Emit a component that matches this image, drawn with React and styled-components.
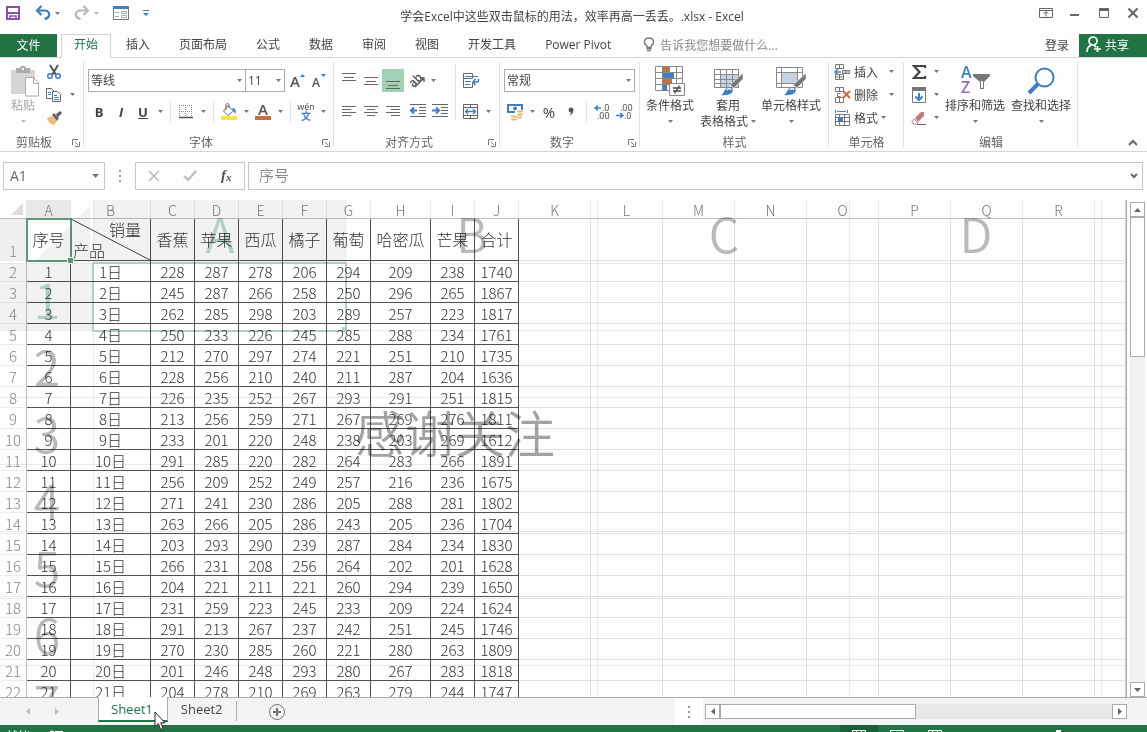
import { useState } from 'react';
import styled, { createGlobalStyle, css } from 'styled-components';

const uiFont = '"Open Sans", "Noto Sans CJK SC", sans-serif';
const cellFont = '"Noto Sans CJK SC", "Noto Sans", sans-serif';

const colors = {
  green: '#217346',
  blue: '#3f7fbf',
  gray: '#777',
  text: '#444',
  line: '#d4d4d4',
  orange: '#c4703f',
};

const GlobalStyle = createGlobalStyle`
  * { box-sizing: border-box; }

  body {
    margin: 0;
    overflow: hidden;
    background: #fdfdfd;
    font-family: ${uiFont};
    font-size: 12px;
    color: ${colors.text};
  }

  button, input, select {
    font: inherit;
    color: inherit;
    padding: 0;
    margin: 0;
    border: 0;
    background: none;
  }

  svg { display: block; flex: none; overflow: visible; }
`;

const Window = styled.div`
  height: calc(100vh + 15px);
  display: flex;
  flex-direction: column;
`;

/* title bar */

const TitleBar = styled.header`
  flex: none;
  height: 34px;
  display: grid;
  grid-template-columns: 1fr auto 1fr;
  align-items: start;
  padding: 0 8px 0 5px;
`;

const QuickAccess = styled.div`
  display: flex;
  align-items: center;
  gap: 14px;
  height: 26px;
`;

const Title = styled.h1`
  margin: 0;
  font-size: 12px;
  font-weight: 400;
  line-height: 34px;
  white-space: nowrap;
`;

const WindowButtons = styled.div`
  display: flex;
  justify-content: flex-end;
  gap: 14px;
  height: 26px;
  align-items: center;
`;

const PlainButton = styled.button`
  display: flex;
  align-items: center;
  justify-content: center;
  gap: 4px;
`;

/* tab row */

const TabRow = styled.nav`
  flex: none;
  height: 24px;
  display: flex;
  gap: 1px;
  border-bottom: 1px solid ${colors.line};
`;

const FileTab = styled.button`
  width: 57px;
  margin-right: 3px;
  padding-bottom: 2px;
  background: ${colors.green};
  color: #fff;
`;

const Tab = styled.button`
  height: 24px;
  padding: 0 14px 4px;
  white-space: nowrap;

  ${props => props.$active && css`
    padding: 0 12px 5px;
    border: 1px solid ${colors.line};
    border-bottom: 0;
    background: #fdfdfd;
    color: ${colors.green};
  `}
`;

const TellMe = styled.button`
  display: flex;
  align-items: center;
  gap: 5px;
  margin-left: 17px;
  padding-bottom: 2px;
  color: #888;
  white-space: nowrap;
`;

const Account = styled.div`
  display: flex;
  gap: 10px;
  margin-left: auto;

  button { padding-bottom: 2px; }
`;

const ShareButton = styled.button`
  display: flex;
  align-items: center;
  gap: 4px;
  padding: 0 18px 0 7px;
  background: ${colors.green};
  color: #fff;
`;

/* ribbon */

const Ribbon = styled.section`
  flex: none;
  height: 94px;
  display: flex;
  border-bottom: 1px solid ${colors.line};
`;

const Group = styled.div`
  flex: 0 0 ${props => props.$width}px;
  display: flex;
  flex-direction: column;
  padding: 3px 3px 0 4px;
  margin: 4px 0;
  border-right: 1px solid #e1e1e1;
`;

const GroupBody = styled.div`
  flex: none;
  height: 66px;
  display: flex;
  align-items: flex-start;
`;

const GroupFooter = styled.div`
  flex: none;
  height: 14px;
  display: flex;
  align-items: center;
  margin-top: 5px;
  line-height: 14px;
  color: #666;
  white-space: nowrap;

  span { flex: 1; text-align: center; }
  button { width: 8px; margin-left: 8px; }
`;

const Stack = styled.div`
  display: flex;
  flex-direction: column;
`;

const ToolRow = styled.div`
  display: flex;
  align-items: center;
  height: 31px;
`;

const SmallRow = styled.div`
  display: flex;
  align-items: center;
  height: 23px;
  margin-top: ${props => (props.$first ? '-5px' : '0')};
`;

const Tool = styled.button`
  width: ${props => props.$width || 22}px;
  height: 23px;
  display: flex;
  align-items: center;
  justify-content: center;
  font-size: ${props => (props.$large ? 15 : 13)}px;
  background: ${props => (props.$on ? '#9fd1b7' : 'none')};
`;

const CaretButton = styled.button`
  width: 12px;
  height: 22px;
  display: flex;
  align-items: center;
  justify-content: center;
`;

const Rule = styled.span`
  flex: none;
  width: 1px;
  height: ${props => props.$height || 22}px;
  margin: 0 4px;
  background: #e1e1e1;
`;

const Gap = styled.span`
  flex: none;
  width: ${props => props.$width || 3}px;
`;

const SelectWrap = styled.div`
  position: relative;
  flex: ${props => (props.$width ? `0 0 ${props.$width}px` : '1')};
  margin-right: ${props => (props.$joined ? '-1px' : '0')};
`;

const Select = styled.select`
  appearance: none;
  width: 100%;
  height: 23px;
  padding: 0 14px 0 2px;
  border: 1px solid #ababab;
  border-radius: 0;
  background: #fff;
`;

const SelectCaret = styled.span`
  position: absolute;
  right: 4px;
  top: 10px;
  pointer-events: none;
`;

const BigButton = styled.button`
  width: ${props => props.$width}px;
  display: flex;
  flex-direction: column;
  align-items: center;
  line-height: 15px;
  white-space: nowrap;
  color: ${props => (props.$disabled ? '#a6a6a6' : colors.text)};
`;

const BigIcon = styled.span`
  height: 32px;
  display: flex;
  align-items: center;
`;

const BigLine = styled.span`
  height: 16px;
  display: flex;
  align-items: center;
  gap: 3px;
`;

const LabelTool = styled.button`
  display: flex;
  align-items: center;
  gap: 3px;
  padding-left: 1px;
  white-space: nowrap;
`;

const CollapseSlot = styled.div`
  flex: 1;
  display: flex;
  justify-content: flex-end;
  align-items: flex-end;
  padding: 0 9px 5px 0;
`;

/* formula bar */

const FormulaBar = styled.div`
  flex: none;
  display: flex;
  align-items: stretch;
  height: 48px;
  padding: 10px 4px 10px 3px;
`;

const NameBox = styled.div`
  flex: 0 0 102px;
  min-width: 0;
  display: flex;
  align-items: center;
  border: 1px solid #c6c6c6;
  padding: 0 5px 0 6px;

  input {
    flex: 1;
    width: 0;
    min-width: 0;
    padding-bottom: 2px;
    font-size: 14px;
    color: #666;
  }
`;

const Dots = styled.span`
  flex: 0 0 30px;
  display: flex;
  align-items: center;
  justify-content: center;
`;

const FormulaButtons = styled.div`
  flex: 0 0 110px;
  display: flex;
  align-items: center;
  justify-content: space-between;
  padding: 0 9px 0 12px;
  margin-right: 3px;
  border: 1px solid #c6c6c6;
`;

const FormulaInput = styled.div`
  flex: 1;
  display: flex;
  align-items: center;
  border: 1px solid #c6c6c6;
  padding: 0 3px 0 10px;

  input {
    flex: 1;
    min-width: 0;
    padding-bottom: 3px;
    font-family: ${cellFont};
    font-size: 15px;
    font-weight: 300;
    color: #666;
  }
`;

/* sheet */

const SheetArea = styled.main`
  flex: 1;
  min-height: 0;
  display: flex;
`;

const GridPane = styled.div`
  position: relative;
  flex: 1;
  min-width: 0;
  overflow: hidden;
  border-right: 1px solid #ababab;
`;

const Grid = styled.table`
  width: 100%;
  table-layout: fixed;
  border-collapse: separate;
  border-spacing: 0;
  font-family: ${cellFont};
  font-weight: 300;
  font-size: 15px;
  line-height: 18px;
  color: #333;

  th, td {
    padding: 0;
    text-align: center;
    font-weight: 300;
    overflow: hidden;
    white-space: nowrap;
  }
`;

const ColHead = styled.th`
  height: 19px;
  line-height: 20px;
  font-size: 14px;
  color: #777;
  border-right: 1px solid #e6e6e6;
  border-bottom: 1px solid #bdbdbd;
  background: ${props => (props.$on ? '#e8e8e8' : '#fdfdfd')};

  /* the letters sit low in the 18px strip */
  span { display: block; height: 18px; }
`;

const Corner = styled(ColHead)`
  svg { margin: 0 3px 0 auto; }
`;

const RowHead = styled.th`
  height: ${props => (props.$tall ? 42 : 21)}px;
  vertical-align: bottom;
  color: #888;
  border-right: 1px solid #bdbdbd;
  border-bottom: 1px solid #ececec;
  background: ${props => (props.$on ? '#efefef' : '#fdfdfd')};
`;

const Cell = styled.td`
  vertical-align: bottom;
  border-right: 1px solid ${props => (props.$data ? '#505050' : '#e0e0e0')};
  border-bottom: 1px solid ${props => (props.$data ? '#505050' : '#e0e0e0')};
`;

const TitleCell = styled(Cell)`
  && { padding-bottom: 2px; }
  vertical-align: middle;
  font-size: 16px;
`;

const SelectedCell = styled(TitleCell)`
  && { overflow: visible; }
  position: relative;

  &::before {
    content: '';
    position: absolute;
    inset: -1px -2px -2px -1px;
    border: 2px solid #5f9879;
  }

  &::after {
    content: '';
    position: absolute;
    right: -3px;
    bottom: -3px;
    width: 5px;
    height: 5px;
    background: #5f9879;
    outline: 1px solid #fff;
  }
`;

const SplitCell = styled(Cell)`
  font-size: 16px;
`;

const Split = styled.div`
  position: relative;
  height: 41px;
  display: flex;
  flex-direction: column;
  justify-content: space-between;
  line-height: 20px;

  svg {
    position: absolute;
    inset: 0;
    width: 100%;
    height: 100%;
  }

  span:first-of-type { align-self: flex-end; margin-right: 9px; }
  span:last-of-type { align-self: flex-start; margin-left: 2px; }
`;

/* magnified sheet that fades over the normal one */

const Ghost = styled.div`
  position: absolute;
  inset: 0;
  display: grid;
  grid-template-columns: 94px repeat(4, 252px) 1fr;
  grid-template-rows: 64px;
  grid-auto-rows: 67px;
  overflow: hidden;
  pointer-events: none;
  mix-blend-mode: multiply;
  font-family: ${cellFont};
  font-weight: 350;
  font-size: 48px;
  line-height: 48px;
  color: #bbb;
`;

const GhostCell = styled.div`
  position: relative;
  display: flex;
  align-items: center;
  justify-content: ${props => (props.$head ? 'center' : 'flex-start')};
  padding: ${props => (props.$head ? '1px 0 0 1px' : '0 0 0 9px')};
  border-right: 1px solid #ebebeb;
  border-bottom: 1px solid #ebebeb;
  white-space: nowrap;
  background: ${props => (props.$on ? '#f4f4f4' : 'none')};
  color: ${props => (props.$on ? '#b4d2c2' : 'inherit')};
`;

const GhostCorner = styled(GhostCell)`
  align-items: flex-end;
  justify-content: flex-end;
  padding: 0 3px 1px 0;
`;

const GhostNote = styled.span`
  font-size: 50px;
  color: #a3a3a3;
`;

const GhostSelection = styled.span`
  position: absolute;
  inset: -2px;
  border: 2px solid #b4d2c2;

  &::after {
    content: '';
    position: absolute;
    right: -2px;
    bottom: -2px;
    width: 5px;
    height: 5px;
    background: #b4d2c2;
  }
`;

/* scroll bars */

const VScroll = styled.div`
  flex: 0 0 20px;
  display: flex;
  flex-direction: column;
  padding: 2px 2px 0 3px;
`;

const VTrack = styled.div`
  flex: 1;
  background: #f1f1f1;
`;

const VThumb = styled.div`
  height: 30%;
  border: 1px solid #ababab;
  background: #fff;
`;

const ScrollButton = styled.button`
  flex: none;
  width: 15px;
  height: 15px;
  display: flex;
  align-items: center;
  justify-content: center;
  border: 1px solid #ababab;
  background: #fff;
`;

const HScroll = styled.div`
  flex: 0 1 422px;
  display: flex;
  margin: 6px 20px 6px 2px;
`;

const HTrack = styled.div`
  flex: 1;
  background: #e8e8e8;
`;

const HThumb = styled.div`
  width: 50%;
  height: 15px;
  border: 1px solid #ababab;
  background: #fff;
`;

/* sheet tabs */

const SheetBar = styled.footer`
  flex: none;
  height: 28px;
  display: flex;
  border-top: 1px solid #ababab;
  background: #f3f3f3;
`;

const SheetNav = styled.div`
  flex: 0 0 98px;
  display: flex;
  align-items: center;
  gap: 22px;
  padding-left: 24px;
`;

const SheetTab = styled.button`
  position: relative;
  height: 24px;
  padding: 0 13px 2px;
  font-size: 13px;

  ${props => props.$active && css`
    margin-top: -1px;
    height: 25px;
    padding: 0 14px 0 12px;
    border-left: 1px solid #ababab;
    border-right: 1px solid #ababab;
    border-bottom: 2px solid ${colors.green};
    background: #fff;
    color: ${colors.green};
  `}
`;

const Pointer = styled.span`
  position: absolute;
  left: 55px;
  top: 14px;
  z-index: 2;
`;

const SheetDivider = styled.span`
  width: 1px;
  height: 20px;
  margin-top: 3px;
  background: #ababab;
`;

const AddSheet = styled(PlainButton)`
  margin-left: 31px;
`;

const Splitter = styled.span`
  flex: 0 0 28px;
  display: flex;
  align-items: center;
  justify-content: center;
  margin-left: auto;
  background: #fff;
`;

/* status bar */

const StatusBar = styled.div`
  flex: none;
  height: 22px;
  display: flex;
  align-items: center;
  gap: 19px;
  padding: 0 20px 0 6px;
  background: ${colors.green};
  color: #fff;
`;

const ViewButtons = styled.div`
  display: flex;
  align-self: stretch;
  margin-left: auto;
`;

const ViewButton = styled.button`
  width: 38px;
  display: flex;
  align-items: center;
  justify-content: center;
  background: ${props => (props.$on ? '#18603a' : 'none')};
`;

const Zoom = styled.input`
  appearance: none;
  width: 104px;
  height: 22px;

  &::-webkit-slider-runnable-track {
    height: 1px;
    background: #9fc5af;
  }

  &::-webkit-slider-thumb {
    appearance: none;
    width: 5px;
    height: 12px;
    margin-top: -6px;
    background: #fff;
  }
`;

/* icons */

const Caret = ({ color = '#777' }) => (
  <svg width="5" height="3" viewBox="0 0 5 3"><path d="M0 0h5L2.500 3z" fill={color} /></svg>
);

const SaveIcon = () => (
  <svg width="16" height="16" viewBox="0 0 16 16" fill="none" stroke="#8653a5" strokeWidth="2">
    <path d="M2 2h12v12H2zM2 8h12" />
    <path d="M5 14v-3h6v3" strokeWidth="1.500" />
  </svg>
);

const UndoIcon = ({ flip, color }) => (
  <svg width="16" height="16" viewBox="0 0 16 16" fill="none" stroke={color} strokeWidth="2.200">
    <g transform={flip ? 'matrix(-1 0 0 1 16 0)' : undefined}>
      <path d="M2 5.500h7.500c6.500 0 6 7.500 0 8.500" />
      <path d="M6.500 1L2 5.500 6.500 10" />
    </g>
  </svg>
);

const FormIcon = () => (
  <svg width="16" height="16" viewBox="0 0 16 16" fill="none" stroke="#777">
    <path d="M.5 2v12.500h15V2" />
    <path d="M0 2.500h16" stroke={colors.blue} strokeWidth="3" />
    <path d="M2 7.500h4M2 11.500h4M8.500 6.500h5v2h-5zM8.500 10.500h5v2h-5z" stroke="#aaa" />
  </svg>
);

const CustomizeIcon = () => (
  <svg width="6" height="7" viewBox="0 0 6 7" fill={colors.blue}><path d="M0 0h6v1H0zM0 3h6L3 6z" /></svg>
);

const RibbonModeIcon = () => (
  <svg width="14" height="12" viewBox="0 0 14 12" fill="none" stroke="#666">
    <path d="M.5 1.500h13v9H.5zM0 3.500h14M7 9.500V5M4.500 7L7 4.500 9.500 7" />
  </svg>
);

const MinimizeIcon = () => (
  <svg width="16" height="12" viewBox="0 0 16 12"><path d="M3 7h9v2H3z" fill="#666" /></svg>
);

const MaximizeIcon = () => (
  <svg width="16" height="12" viewBox="0 0 16 12" fill="none" stroke="#666"><path d="M2.500 1.500h9v9h-9z" /><path d="M2 2.500h10" strokeWidth="3" /></svg>
);

const CloseIcon = () => (
  <svg width="12" height="12" viewBox="0 0 12 12" stroke="#666" strokeWidth="2"><path d="M1.500 1.500l9 9M10.500 1.500l-9 9" /></svg>
);

const BulbIcon = () => (
  <svg width="12" height="15" viewBox="0 0 12 15" fill="none" stroke="#777" strokeWidth="1.400">
    <path d="M4 10.500V9C-.5 6 1.500 1 6 1s6.500 5 2 8v1.500z" />
    <path d="M3.500 11.500h5M4 13.500h4" />
  </svg>
);

const PersonIcon = () => (
  <svg width="15" height="17" viewBox="0 0 15 17" fill="none" stroke="#fff" strokeWidth="1.700">
    <circle cx="7" cy="5" r="4" />
    <path d="M1 16c0-4 1.500-6 4.500-7M8 9.500l2 1.500M11.500 10v6M8 13h7" />
  </svg>
);

const PasteIcon = () => (
  <svg width="30" height="32" viewBox="0 0 30 32">
    <path d="M3 5h24v24H3z" fill="#d6d6d6" />
    <path d="M8 3h4c1-3 5-3 6 0h4v5H8z" fill="#ababab" />
    <path d="M14 3h2v2h-2z" fill="#fdfdfd" />
    <path d="M17.500 12.500h8l5 5.500v13h-13z" fill="#fff" stroke="#ababab" />
    <path d="M25.500 12.500v6h5" fill="none" stroke="#ababab" />
  </svg>
);

const CutIcon = () => (
  <svg width="16" height="16" viewBox="0 0 16 16" fill="none">
    <path d="M4 1l6 10M12 1L6 11" stroke="#555" strokeWidth="2" />
    <circle cx="4" cy="12" r="2.300" stroke={colors.blue} strokeWidth="1.500" />
    <circle cx="12" cy="12" r="2.300" stroke={colors.blue} strokeWidth="1.500" />
  </svg>
);

const CopyIcon = () => (
  <svg width="16" height="16" viewBox="0 0 16 16" fill="#fff" stroke="#666">
    <path d="M.5 1.500h5l3 3v7h-8z" />
    <path d="M6.500 4.500h5l3 3v7h-8z" />
    <path d="M2 5.500h3M2 7.500h3M8 8.500h3M8 10.500h5M8 12.500h5" stroke={colors.blue} />
  </svg>
);

const PainterIcon = () => (
  <svg width="16" height="16" viewBox="0 0 16 16">
    <path d="M1 8l5-2 5 5-3 4c-3 0-6-3-7-7z" fill="#eebb7a" />
    <path d="M6 5l2-2 5 5-2 3z" fill="#666" />
    <path d="M10 4.500l4-3.500 2 2-4 4z" fill="#555" />
  </svg>
);

const GrowFont = ({ small }) => (
  <svg width="18" height="20" viewBox="0 0 18 20" fontFamily={uiFont} fontWeight="600">
    <text x="3" y="16" fontSize={small ? 12 : 15} fill="#555">A</text>
    <path d={small ? 'M12 3h5l-2.500 3z' : 'M13 6h5l-2.500-3z'} fill={colors.blue} />
  </svg>
);

const BorderIcon = () => (
  <svg width="14" height="14" viewBox="0 0 14 14" stroke="#888" fill="none">
    <path d="M0 .5h14M0 6.500h14M.5 0v12M6.500 0v12M12.500 0v12" strokeDasharray="1 1" />
    <path d="M0 12.500h14" strokeWidth="1.500" stroke="#555" />
  </svg>
);

const FillIcon = () => (
  <svg width="18" height="18" viewBox="0 0 18 18">
    <path d="M8 2.500l5.500 5.500-5.500 4.500L3.500 8z" fill="#fff" stroke="#666" />
    <path d="M6 7V2c0-2 3-2 3 0v3" fill="none" stroke="#666" />
    <path d="M12 5c4 0 4 3 3.500 6l-2-3z" fill={colors.blue} />
    <path d="M1 13h16v4H1z" fill="#f9e63c" />
  </svg>
);

const FontColorIcon = () => (
  <svg width="18" height="18" viewBox="0 0 18 18">
    <text x="9" y="12" textAnchor="middle" fontSize="15" fontWeight="600" fontFamily={uiFont} fill="#555">A</text>
    <path d="M1 13h16v4H1z" fill={colors.orange} />
  </svg>
);

const PinyinIcon = () => (
  <svg width="18" height="20" viewBox="0 0 18 20" textAnchor="middle">
    <text x="9" y="8" fontSize="9" fontFamily={uiFont} fill="#444">wén</text>
    <text x="9" y="18" fontSize="10" fontWeight="700" fontFamily={cellFont} fill={colors.blue}>文</text>
  </svg>
);

// each line is [y, x1, x2]
const Lines = ({ lines, children }) => (
  <svg width="16" height="16" viewBox="0 0 16 16" stroke="#666" fill="none">
    <path d={lines.map(([y, x1, x2]) => `M${x1} ${y}.5H${x2}`).join('')} />
    {children}
  </svg>
);

const OrientIcon = () => (
  <svg width="17" height="17" viewBox="0 0 17 17" fill="none">
    <text x="0" y="12" fontSize="12" fontWeight="600" fontFamily={uiFont} fill="#555" transform="rotate(-45 7 9)">ab</text>
    <path d="M6 15L15 6M11 6h4v4" stroke="#555" strokeWidth="1.300" />
  </svg>
);

const WrapIcon = () => (
  <svg width="18" height="16" viewBox="0 0 18 16" fill="none" stroke="#666">
    <path d="M1.500.5h9v5h-9zM1.500 5.500v9h9v-5" />
    <path d="M3 3.500h13M3 8.500h6M3 11.500h5" stroke={colors.blue} />
    <path d="M16.500 6v1.500c0 1-1 1.500-2 1.500H11M13.500 6L11 9l2.500 3" stroke={colors.blue} strokeWidth="1.500" />
  </svg>
);

const MergeIcon = () => (
  <svg width="16" height="16" viewBox="0 0 16 16" fill="none" stroke="#666">
    <path d="M.5.5h14v14H.5zM0 3.500h15M0 11.500h15M7.500 0v3M7.500 12v3" />
    <path d="M2 7.500h11M5 5L2.500 7.500 5 10M10 5l2.500 2.500L10 10" stroke={colors.blue} strokeWidth="1.300" />
  </svg>
);

const MoneyIcon = () => (
  <svg width="18" height="18" viewBox="0 0 18 18">
    <path d="M1 1h16v9H1z" fill={colors.blue} />
    <path d="M3 3h12v5H3z" fill="#fff" />
    <circle cx="9" cy="5.500" r="2" fill={colors.blue} />
    <path d="M9 7h9v11H4v-6h5z" fill="#fdfdfd" />
    <g stroke="#e9b872" strokeWidth="2" strokeLinecap="round">
      <path d="M12 8.500h4M12 11.500h4M12 14.500h3M6 13.500h4M6 16.500h4" />
    </g>
  </svg>
);

const CommaIcon = () => (
  <svg width="6" height="9" viewBox="0 0 6 9"><path d="M1 1.500C2.500-.5 5.500.5 5.500 3 5.500 5.500 4 8 1.500 8.500 2.500 7.500 3 6.500 3 5.500 1 5.500 0 3.500 1 1.500z" fill="#555" /></svg>
);

const DecimalIcon = ({ less }) => (
  <svg width="18" height="18" viewBox="0 0 18 18" fontFamily={uiFont} fontSize="9" fill="#444">
    <text x={less ? 5 : 9} y="8">{less ? '.00' : '.0'}</text>
    <text x={less ? 9 : 4} y="16">{less ? '.0' : '.00'}</text>
    <path
      d={less ? 'M1 12.500h7M5 10l3 2.500L5 15' : 'M2 5h6M5 2.500L2 5l3 2.500'}
      fill="none" stroke={colors.blue} strokeWidth="1.500"
    />
  </svg>
);

const SheetGridPath = 'M.5.500h27v24H.5zM0 6.500h28M0 12.500h28M0 18.500h28M7.500 0v25M14.500 0v25M21.500 0v25';

const CondIcon = () => (
  <svg width="30" height="31" viewBox="0 0 30 31">
    <path d={SheetGridPath} fill="#fff" stroke="#888" />
    <path d="M8 1h6v5H8zM8 13h9v5H8z" fill={colors.orange} />
    <path d="M8 7h11v5H8zM8 19h4v6H8z" fill={colors.blue} />
    <path d="M14.500 17.500h15v12h-15z" fill="#fff" stroke="#888" />
    <path d="M18 22h8M18 25h8M24.500 19.500l-5 8" stroke="#444" strokeWidth="1.300" />
  </svg>
);

const Brush = () => (
  <g>
    <path d="M30 7v6l-9 9-4-3z" fill="#777" stroke="#fdfdfd" strokeWidth=".6" />
    <path d="M8 29c3-1 3-7 8-8 3 0 5 3 3 5.500-2 2.500-7 3-11 2.500z" fill={colors.blue} />
    <path d="M14 24c1-2 3-2 4 0" stroke="#fff" fill="none" strokeWidth="1.500" />
  </g>
);

const TableFormatIcon = () => (
  <svg width="30" height="31" viewBox="0 0 30 31">
    <path d="M1.500 3.500h24v18h-24z" fill="#fff" />
    <path d="M8 8h18v14H8z" fill="#c5d3e2" />
    <path d="M1.500 3.500h24v18h-24zM1 8.500h25M1 13.500h25M1 17.500h25M7.500 3v19M13.500 3v19M19.500 3v19" fill="none" stroke="#888" />
    <Brush />
  </svg>
);

const CellStyleIcon = () => (
  <svg width="30" height="31" viewBox="0 0 30 31">
    <path d="M.5 1.500h26v20H.5zM0 6.500h27M0 17.500h27M5.500 1v21M21.500 1v21" fill="#fff" stroke="#888" />
    <path d="M6 7h15v10H6z" fill="#c5d3e2" />
    <Brush />
  </svg>
);

const CellsIcon = ({ kind }) => (
  <svg width="17" height="16" viewBox="0 0 17 16" fill="none" stroke="#777">
    {kind === 'insert' && (
      <>
        <path d="M1.500.5h8v4h-8zM5.500.5v4M1.500 10.500h8v5h-8zM5.500 10.500v5M1 13h9" />
        <path d="M8.500 6.500h7v3h-7zM12 6.500v3" fill="#c5d3e2" />
        <path d="M1 8h6M4 5L1 8l3 3" stroke={colors.blue} strokeWidth="1.500" />
      </>
    )}
    {kind === 'delete' && (
      <>
        <path d="M1.500.5h8v4h-8zM5.500.5v4M1.500 10.500h8v5h-8zM5.500 10.500v5M6.500 6.500h-3v3h3" />
        <path d="M9 4l7 7M16 4l-7 7" stroke={colors.orange} strokeWidth="2" />
      </>
    )}
    {kind === 'format' && (
      <>
        <path d="M1.500 4.500h14v11h-14zM1 7.500h15M1 11.500h15M5.500 4v12M10.500 4v12" />
        <path d="M4 8h5v4H4z" fill={colors.blue} stroke="none" />
        <path d="M1.500 0v3M13.500 0v3M3 1.500h9" stroke={colors.blue} />
      </>
    )}
  </svg>
);

const SumIcon = () => (
  <svg width="16" height="16" viewBox="0 0 16 16"><path d="M14 4V2H3l5.500 6L3 14h11v-2" fill="none" stroke="#444" strokeWidth="2.200" /></svg>
);

const FillDownIcon = () => (
  <svg width="16" height="16" viewBox="0 0 16 16" fill="none">
    <path d="M1.500.5h13v15h-13z" stroke="#777" />
    <path d="M1 2h14" stroke="#777" strokeWidth="4" />
    <path d="M8 6v7M4.500 9.500L8 13l3.500-3.500" stroke={colors.blue} strokeWidth="2" />
  </svg>
);

const EraserIcon = () => (
  <svg width="16" height="16" viewBox="0 0 16 16">
    <path d="M4 8l6-6h3v4l-6 6z" fill="#bd7d80" />
    <path d="M3 9l4 4-1.500 1h-3L1 11.500z" fill="#fff" stroke="#bd7d80" />
    <path d="M6 14.500h9" stroke="#666" />
  </svg>
);

const SortIcon = () => (
  <svg width="32" height="30" viewBox="0 0 32 30" fontFamily={uiFont} fontWeight="600" fontSize="16">
    <text x="2" y="12" fill={colors.blue}>A</text>
    <text x="2" y="27" fill="#8f6fb5">Z</text>
    <path d="M14 8h17v2l-6 6v7h-4v-7l-7-6z" fill="#777" />
    <path d="M22 15h2v7h-2z" fill="#fff" />
  </svg>
);

const FindIcon = () => (
  <svg width="28" height="28" viewBox="0 0 28 28" fill="none" stroke={colors.blue}>
    <circle cx="17.500" cy="10.500" r="9" strokeWidth="2" />
    <path d="M11 17l-9 9" strokeWidth="4" />
  </svg>
);

const Launcher = () => (
  <svg width="8" height="8" viewBox="0 0 8 8" fill="none" stroke="#777">
    <path d="M.5 6V.5H6M3 3l3 3M7.500 3v4.500H3" />
  </svg>
);

const Chevron = ({ up }) => (
  <svg width="10" height="6" viewBox="0 0 10 6" fill="none" stroke="#666" strokeWidth="2">
    <path d={up ? 'M1 5l4-4 4 4' : 'M2 1l3 3 3-3'} />
  </svg>
);

const DotsIcon = () => (
  <svg width="2" height="12" viewBox="0 0 2 12" fill="#999"><path d="M0 0h2v2H0zM0 5h2v2H0zM0 10h2v2H0z" /></svg>
);

const CancelIcon = () => (
  <svg width="12" height="12" viewBox="0 0 12 12" stroke="#bbb" strokeWidth="1.600"><path d="M1 1l10 10M11 1L1 11" /></svg>
);

const CheckIcon = () => (
  <svg width="14" height="12" viewBox="0 0 14 12" fill="none" stroke="#bbb" strokeWidth="2.200"><path d="M1 6l4 4 8-9" /></svg>
);

const FxIcon = () => (
  <svg width="16" height="16" viewBox="0 0 16 16" fontFamily='"Liberation Serif", serif' fontStyle="italic" fontWeight="700" fill="#555">
    <text x="2" y="12" fontSize="15">f</text>
    <text x="7" y="13" fontSize="11">x</text>
  </svg>
);

const arrowPaths = { up: 'M0 6h7L3.500 2z', down: 'M0 2h7L3.500 6z', left: 'M6 0v7L2 3.500z', right: 'M2 0v7l4-3.500z' };
const Arrow = ({ dir, color = '#666' }) => (
  <svg width="7" height="8" viewBox="0 0 7 8"><path d={arrowPaths[dir]} fill={color} /></svg>
);

const AddIcon = () => (
  <svg width="18" height="18" viewBox="0 0 18 18" fill="none" stroke="#777">
    <circle cx="9" cy="9" r="7.500" /><path d="M9 5v8M5 9h8" strokeWidth="2" />
  </svg>
);

const PointerIcon = () => (
  <svg width="13" height="20" viewBox="0 0 13 20"><path d="M1 1v14.500l3.300-3 2.400 6 2.400-1-2.400-5.700H11z" fill="#fff" stroke="#222" /></svg>
);

const viewPaths = {
  normal: 'M.5.500h13v11H.5zM0 4.500h14M0 8.500h14M4.500 0v12M9.500 0v12',
  layout: 'M.5.500h13v11H.5zM3.500 2.500h7v9M3.500 2.500v9M5 5.500h4M5 8.500h4',
  breaks: 'M.5.500h13v11H.5zM4.500 0v7M9.500 0v7M0 7.500h14',
};

/* data */

const tabs = ['开始', '插入', '页面布局', '公式', '数据', '审阅', '视图', '开发工具', 'Power Pivot'];

const columns = [
  { id: 'A', width: 44 },
  { id: 'B', width: 80 },
  { id: 'C', width: 44 },
  { id: 'D', width: 44 },
  { id: 'E', width: 44 },
  { id: 'F', width: 44 },
  { id: 'G', width: 44 },
  { id: 'H', width: 60 },
  { id: 'I', width: 44 },
  { id: 'J', width: 44 },
  ...['K', 'L', 'M', 'N', 'O', 'P', 'Q', 'R'].map(id => ({ id, width: 72 })),
];

const blanks = ['K', 'L', 'M', 'N', 'O', 'P', 'Q', 'R', 'S'];

const fruits = ['香蕉', '苹果', '西瓜', '橘子', '葡萄', '哈密瓜', '芒果', '合计'];

const sales = [
  [228, 287, 278, 206, 294, 209, 238, 1740],
  [245, 287, 266, 258, 250, 296, 265, 1867],
  [262, 285, 298, 203, 289, 257, 223, 1817],
  [250, 233, 226, 245, 285, 288, 234, 1761],
  [212, 270, 297, 274, 221, 251, 210, 1735],
  [228, 256, 210, 240, 211, 287, 204, 1636],
  [226, 235, 252, 267, 293, 291, 251, 1815],
  [213, 256, 259, 271, 267, 269, 276, 1811],
  [233, 201, 220, 248, 238, 203, 269, 1612],
  [291, 285, 220, 282, 264, 283, 266, 1891],
  [256, 209, 252, 249, 257, 216, 236, 1675],
  [271, 241, 230, 286, 205, 288, 281, 1802],
  [263, 266, 205, 286, 243, 205, 236, 1704],
  [203, 293, 290, 239, 287, 284, 234, 1830],
  [266, 231, 208, 256, 264, 202, 201, 1628],
  [204, 221, 211, 221, 260, 294, 239, 1650],
  [231, 259, 223, 245, 233, 209, 224, 1624],
  [291, 213, 267, 237, 242, 251, 245, 1746],
  [270, 230, 285, 260, 221, 280, 263, 1809],
  [201, 246, 248, 293, 280, 267, 283, 1818],
  [204, 278, 210, 269, 263, 279, 244, 1747],
];

const ghostColumns = ['A', 'B', 'C', 'D', ''];
const ghostRows = [1, 2, 3, 4, 5, 6, 7];

const RibbonGroup = ({ name, width, launcher, children }) => (
  <Group $width={width}>
    <GroupBody>{children}</GroupBody>
    <GroupFooter>
      <span>{name}</span>
      {launcher && <PlainButton aria-label={`${name}设置`}><Launcher /></PlainButton>}
    </GroupFooter>
  </Group>
);

const DropDown = ({ label, value, width, joined }) => (
  <SelectWrap $width={width} $joined={joined}>
    <Select aria-label={label} defaultValue={value}>
      <option>{value}</option>
    </Select>
    <SelectCaret><Caret /></SelectCaret>
  </SelectWrap>
);

const More = ({ label }) => <CaretButton aria-label={label}><Caret /></CaretButton>;

const HomeRibbon = () => (
  <Ribbon>
    <RibbonGroup name="剪贴板" width={84} launcher>
      <BigButton $width={38} $disabled>
        <BigIcon><PasteIcon /></BigIcon>
        <BigLine>粘贴</BigLine>
        <BigLine><Caret color="#bbb" /></BigLine>
      </BigButton>
      <Stack>
        <SmallRow $first><Tool $width={24} aria-label="剪切"><CutIcon /></Tool></SmallRow>
        <SmallRow><Tool $width={24} aria-label="复制"><CopyIcon /></Tool><More label="复制选项" /></SmallRow>
        <SmallRow><Tool $width={24} aria-label="格式刷"><PainterIcon /></Tool></SmallRow>
      </Stack>
    </RibbonGroup>

    <RibbonGroup name="字体" width={250} launcher>
      <Stack>
        <ToolRow>
          <DropDown label="字体" value="等线" width={158} joined />
          <DropDown label="字号" value="11" width={40} />
          <Tool aria-label="增大字号"><GrowFont /></Tool>
          <Tool aria-label="减小字号"><GrowFont small /></Tool>
        </ToolRow>
        <ToolRow>
          <Tool aria-label="加粗"><b>B</b></Tool>
          <Tool aria-label="倾斜"><b><i>I</i></b></Tool>
          <Tool aria-label="下划线"><b><u>U</u></b></Tool>
          <More label="下划线选项" />
          <Rule />
          <Tool aria-label="边框"><BorderIcon /></Tool>
          <More label="边框选项" />
          <Rule />
          <Tool aria-label="填充颜色"><FillIcon /></Tool>
          <More label="填充颜色选项" />
          <Tool aria-label="字体颜色"><FontColorIcon /></Tool>
          <More label="字体颜色选项" />
          <Rule />
          <Tool aria-label="拼音"><PinyinIcon /></Tool>
          <More label="拼音选项" />
        </ToolRow>
      </Stack>
    </RibbonGroup>

    <RibbonGroup name="对齐方式" width={166} launcher>
      <Stack>
        <ToolRow>
          <Tool aria-label="顶端对齐"><Lines lines={[[0, 1, 15], [4, 3, 13], [7, 1, 15]]} /></Tool>
          <Tool aria-label="垂直居中"><Lines lines={[[4, 1, 15], [8, 3, 13], [11, 1, 15]]} /></Tool>
          <Tool $on aria-label="底端对齐"><Lines lines={[[8, 1, 15], [12, 3, 13], [15, 1, 15]]} /></Tool>
          <Gap />
          <Tool $width={20} aria-label="方向"><OrientIcon /></Tool>
          <More label="方向选项" />
        </ToolRow>
        <ToolRow>
          <Tool aria-label="左对齐"><Lines lines={[[2, 1, 15], [5, 1, 10], [8, 1, 15], [11, 1, 10]]} /></Tool>
          <Tool aria-label="居中"><Lines lines={[[2, 1, 15], [5, 4, 12], [8, 1, 15], [11, 4, 12]]} /></Tool>
          <Tool aria-label="右对齐"><Lines lines={[[2, 1, 15], [5, 6, 15], [8, 1, 15], [11, 6, 15]]} /></Tool>
          <Gap />
          <Tool aria-label="减少缩进量">
            <Lines lines={[[0, 0, 16], [3, 9, 16], [6, 9, 16], [9, 9, 16], [12, 0, 16]]}>
              <path d="M1 6.500h6M4 3.500l-3 3 3 3" stroke={colors.blue} strokeWidth="2" />
            </Lines>
          </Tool>
          <Tool aria-label="增加缩进量">
            <Lines lines={[[0, 0, 16], [3, 9, 16], [6, 9, 16], [9, 9, 16], [12, 0, 16]]}>
              <path d="M0 6.500h6M4 3.500l3 3-3 3" stroke={colors.blue} strokeWidth="2" />
            </Lines>
          </Tool>
        </ToolRow>
      </Stack>
      <Rule $height={56} />
      <Stack>
        <ToolRow><Tool aria-label="自动换行"><WrapIcon /></Tool></ToolRow>
        <ToolRow><Tool aria-label="合并后居中"><MergeIcon /></Tool><More label="合并选项" /></ToolRow>
      </Stack>
    </RibbonGroup>

    <RibbonGroup name="数字" width={140} launcher>
      <Stack>
        <ToolRow><DropDown label="数字格式" value="常规" width={131} /></ToolRow>
        <ToolRow>
          <Tool aria-label="会计数字格式"><MoneyIcon /></Tool>
          <More label="会计格式选项" />
          <Tool $large aria-label="百分比样式">%</Tool>
          <Tool aria-label="千位分隔样式"><CommaIcon /></Tool>
          <Rule />
          <Tool aria-label="增加小数位数"><DecimalIcon /></Tool>
          <Tool aria-label="减少小数位数"><DecimalIcon less /></Tool>
        </ToolRow>
      </Stack>
    </RibbonGroup>

    <RibbonGroup name="样式" width={189}>
      <BigButton $width={52}>
        <BigIcon><CondIcon /></BigIcon>
        <BigLine>条件格式</BigLine>
        <BigLine><Caret /></BigLine>
      </BigButton>
      <BigButton $width={64}>
        <BigIcon><TableFormatIcon /></BigIcon>
        <BigLine>套用</BigLine>
        <BigLine>表格格式 <Caret /></BigLine>
      </BigButton>
      <BigButton $width={62}>
        <BigIcon><CellStyleIcon /></BigIcon>
        <BigLine>单元格样式</BigLine>
        <BigLine><Caret /></BigLine>
      </BigButton>
    </RibbonGroup>

    <RibbonGroup name="单元格" width={75}>
      <Stack>
        <SmallRow $first><LabelTool><CellsIcon kind="insert" />插入</LabelTool><Gap $width={7} /><More label="插入选项" /></SmallRow>
        <SmallRow><LabelTool><CellsIcon kind="delete" />删除</LabelTool><Gap $width={7} /><More label="删除选项" /></SmallRow>
        <SmallRow><LabelTool><CellsIcon kind="format" />格式<Caret /></LabelTool></SmallRow>
      </Stack>
    </RibbonGroup>

    <RibbonGroup name="编辑" width={174}>
      <Stack>
        <SmallRow $first><Tool aria-label="自动求和"><SumIcon /></Tool><More label="求和选项" /></SmallRow>
        <SmallRow><Tool aria-label="填充"><FillDownIcon /></Tool><More label="填充选项" /></SmallRow>
        <SmallRow><Tool aria-label="清除"><EraserIcon /></Tool><More label="清除选项" /></SmallRow>
      </Stack>
      <BigButton $width={66}>
        <BigIcon><SortIcon /></BigIcon>
        <BigLine>排序和筛选</BigLine>
        <BigLine><Caret /></BigLine>
      </BigButton>
      <BigButton $width={66}>
        <BigIcon><FindIcon /></BigIcon>
        <BigLine>查找和选择</BigLine>
        <BigLine><Caret /></BigLine>
      </BigButton>
    </RibbonGroup>

    <CollapseSlot>
      <PlainButton aria-label="折叠功能区"><Chevron up /></PlainButton>
    </CollapseSlot>
  </Ribbon>
);

const SheetGrid = () => (
  <Grid>
    <colgroup>
      <col style={{ width: 27 }} />
      {columns.map(col => <col key={col.id} style={{ width: col.width }} />)}
      <col />
    </colgroup>
    <thead>
      <tr>
        <Corner aria-label="全选">
          <svg width="12" height="12" viewBox="0 0 12 12"><path d="M12 0v12H0z" fill="#dcdcdc" /></svg>
        </Corner>
        {columns.map(col => <ColHead key={col.id} $on={col.id === 'A'}><span>{col.id}</span></ColHead>)}
        <ColHead />
      </tr>
    </thead>
    <tbody>
      <tr>
        <RowHead $tall $on>1</RowHead>
        <SelectedCell $data>序号</SelectedCell>
        <SplitCell $data>
          <Split>
            <svg viewBox="0 0 79 41" preserveAspectRatio="none">
              <path d="M0 0l79 41" stroke="#444" />
            </svg>
            <span>销量</span>
            <span>产品</span>
          </Split>
        </SplitCell>
        {fruits.map(fruit => <TitleCell key={fruit} $data>{fruit}</TitleCell>)}
        {blanks.map(id => <Cell key={id} />)}
      </tr>
      {sales.map((row, i) => (
        <tr key={i}>
          <RowHead>{i + 2}</RowHead>
          <Cell $data>{i + 1}</Cell>
          <Cell $data>{i + 1}日</Cell>
          {row.map((value, j) => <Cell key={j} $data>{value}</Cell>)}
          {blanks.map(id => <Cell key={id} />)}
        </tr>
      ))}
    </tbody>
  </Grid>
);

const GhostSheet = () => (
  <Ghost aria-hidden="true">
    <GhostCorner>
      <svg width="56" height="56" viewBox="0 0 56 56"><path d="M56 0v56H0z" fill="#f3f3f3" /></svg>
    </GhostCorner>
    {ghostColumns.map((id, i) => <GhostCell key={i} $head $on={id === 'A'}>{id}</GhostCell>)}
    {ghostRows.map(row => [
      <GhostCell key={row} $head $on={row === 1}>{row}</GhostCell>,
      ...ghostColumns.map((id, i) => (
        <GhostCell key={`${row}-${i}`}>
          {row === 1 && id === 'A' && <GhostSelection />}
          {row === 3 && id === 'B' && <GhostNote>感谢关注</GhostNote>}
        </GhostCell>
      )),
    ])}
  </Ghost>
);

const App = () => {
  const [tab, setTab] = useState('开始');

  return (
    <Window lang="zh-CN">
      <GlobalStyle />
      <TitleBar>
        <QuickAccess>
          <PlainButton aria-label="保存"><SaveIcon /></PlainButton>
          <PlainButton aria-label="撤消"><UndoIcon color={colors.blue} /><Caret /></PlainButton>
          <PlainButton aria-label="恢复"><UndoIcon flip color="#b8b8b8" /><Caret color="#bbb" /></PlainButton>
          <PlainButton aria-label="记录单"><FormIcon /></PlainButton>
          <PlainButton aria-label="自定义快速访问工具栏"><CustomizeIcon /></PlainButton>
        </QuickAccess>
        <Title>学会Excel中这些双击鼠标的用法，效率再高一丢丢。.xlsx - Excel</Title>
        <WindowButtons>
          <PlainButton aria-label="功能区显示选项"><RibbonModeIcon /></PlainButton>
          <PlainButton aria-label="最小化"><MinimizeIcon /></PlainButton>
          <PlainButton aria-label="最大化"><MaximizeIcon /></PlainButton>
          <PlainButton aria-label="关闭"><CloseIcon /></PlainButton>
        </WindowButtons>
      </TitleBar>

      <TabRow>
        <FileTab>文件</FileTab>
        {tabs.map(name => (
          <Tab key={name} $active={name === tab} onClick={() => setTab(name)}>{name}</Tab>
        ))}
        <TellMe><BulbIcon />告诉我您想要做什么...</TellMe>
        <Account>
          <PlainButton>登录</PlainButton>
          <ShareButton><PersonIcon />共享</ShareButton>
        </Account>
      </TabRow>

      <HomeRibbon />

      <FormulaBar>
        <NameBox>
          <input aria-label="名称框" defaultValue="A1" />
          <Arrow dir="down" color="#777" />
        </NameBox>
        <Dots><DotsIcon /></Dots>
        <FormulaButtons>
          <PlainButton aria-label="取消"><CancelIcon /></PlainButton>
          <PlainButton aria-label="输入"><CheckIcon /></PlainButton>
          <PlainButton aria-label="插入函数"><FxIcon /></PlainButton>
        </FormulaButtons>
        <FormulaInput>
          <input aria-label="编辑栏" defaultValue="序号" />
          <PlainButton aria-label="展开编辑栏"><Chevron /></PlainButton>
        </FormulaInput>
      </FormulaBar>

      <SheetArea>
        <GridPane>
          <SheetGrid />
          <GhostSheet />
        </GridPane>
        <VScroll>
          <ScrollButton aria-label="向上滚动"><Arrow dir="up" /></ScrollButton>
          <VTrack><VThumb /></VTrack>
          <ScrollButton aria-label="向下滚动"><Arrow dir="down" /></ScrollButton>
        </VScroll>
      </SheetArea>

      <SheetBar>
        <SheetNav>
          <PlainButton aria-label="上一张"><Arrow dir="left" color="#bbb" /></PlainButton>
          <PlainButton aria-label="下一张"><Arrow dir="right" color="#bbb" /></PlainButton>
        </SheetNav>
        <SheetTab $active>Sheet1<Pointer><PointerIcon /></Pointer></SheetTab>
        <SheetTab>Sheet2</SheetTab>
        <SheetDivider />
        <AddSheet aria-label="新工作表"><AddIcon /></AddSheet>
        <Splitter><DotsIcon /></Splitter>
        <HScroll>
          <ScrollButton aria-label="向左滚动"><Arrow dir="left" /></ScrollButton>
          <HTrack><HThumb /></HTrack>
          <ScrollButton aria-label="向右滚动"><Arrow dir="right" /></ScrollButton>
        </HScroll>
      </SheetBar>

      <StatusBar>
        <span>就绪</span>
        <svg width="14" height="12" viewBox="0 0 14 12" fill="#fff">
          <circle cx="3" cy="3" r="2.500" /><path d="M6 1h8v2H6zM0 5h14v7H0z" />
        </svg>
        <ViewButtons>
          {Object.keys(viewPaths).map(view => (
            <ViewButton key={view} $on={view === 'normal'} aria-label={view}>
              <svg width="14" height="12" viewBox="0 0 14 12" fill="none" stroke="#fff"><path d={viewPaths[view]} /></svg>
            </ViewButton>
          ))}
        </ViewButtons>
        <Zoom type="range" aria-label="缩放" min="10" max="190" defaultValue="160" />
        <span>100%</span>
      </StatusBar>
    </Window>
  );
};

export default App;
